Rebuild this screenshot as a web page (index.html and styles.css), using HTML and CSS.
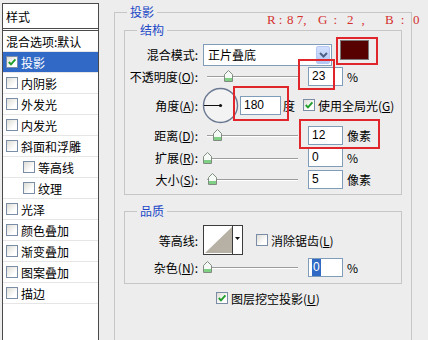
FILE: index.html
```html
<!DOCTYPE html>
<html>
  <head>
    <meta charset="utf-8">
    <title>图层样式 - 投影</title>
    <link rel="stylesheet" href="styles.css">
  </head>
  <body>
    <div id="dialog">
      <!-- 左侧样式列表 -->
      <div class="style-list">
        <div class="style-head">样式</div>
        <div class="style-item">混合选项:默认</div>
        <div class="style-item selected">
          <span class="check"><svg class="tick" viewBox="0 0 10 10"><path d="M1.8 5 L4 7.4 L8.4 2.4" /></svg></span>投影
        </div>
        <div class="style-item"><span class="check"></span>内阴影</div>
        <div class="style-item"><span class="check"></span>外发光</div>
        <div class="style-item"><span class="check"></span>内发光</div>
        <div class="style-item"><span class="check"></span>斜面和浮雕</div>
        <div class="style-item sub"><span class="check"></span>等高线</div>
        <div class="style-item sub"><span class="check"></span>纹理</div>
        <div class="style-item"><span class="check"></span>光泽</div>
        <div class="style-item"><span class="check"></span>颜色叠加</div>
        <div class="style-item"><span class="check"></span>渐变叠加</div>
        <div class="style-item"><span class="check"></span>图案叠加</div>
        <div class="style-item"><span class="check"></span>描边</div>
      </div>

      <!-- 投影设置 -->
      <div class="options">
        <fieldset class="group outer">
          <legend>投影</legend>

          <fieldset class="group structure">
            <legend>结构</legend>
            <div class="field blend">
              <label>混合模式:</label>
              <div class="select">
                <span class="select-text">正片叠底</span>
                <span class="select-btn">
                  <svg width="9" height="6" viewBox="0 0 9 6"><path d="M1 1 L4.5 4.5 L8 1" fill="none" stroke="#4d6185" stroke-width="2"/></svg>
                </span>
              </div>
              <span class="swatch"></span>
            </div>
            <div class="field opacity">
              <label>不透明度(<u>O</u>):</label>
              <div class="slider">
                <span class="thumb" style="left: 21px"><svg width="9" height="12" viewBox="0 0 9 12"><path d="M0.5 4.5 L4.5 0.5 L8.5 4.5 L8.5 11.5 L0.5 11.5 Z" fill="#f6faf6" stroke="#7f8c7f"/><rect x="1" y="8" width="7" height="3" fill="#7fcf84"/></svg></span>
              </div>
              <div class="num">23</div>
              <span class="unit">%</span>
            </div>
            <div class="field angle">
              <label>角度(<u>A</u>):</label>
              <svg class="dial" width="37" height="37" viewBox="0 0 37 37">
                <circle cx="18.5" cy="18.5" r="17" fill="#f3f3f3" stroke="#6b7891" stroke-width="1.4"/>
                <line x1="2" y1="18.5" x2="18.5" y2="18.5" stroke="#111" stroke-width="1"/>
                <circle cx="18.5" cy="18.5" r="1.6" fill="#111"/>
              </svg>
              <div class="num wide">180</div>
              <span class="unit">度</span>
              <span class="check global"><svg class="tick" viewBox="0 0 10 10"><path d="M1.8 5 L4 7.4 L8.4 2.4" /></svg></span>
              <span class="check-text">使用全局光(<u>G</u>)</span>
            </div>
            <div class="field distance">
              <label>距离(<u>D</u>):</label>
              <div class="slider">
                <span class="thumb" style="left: 10px"><svg width="9" height="12" viewBox="0 0 9 12"><path d="M0.5 4.5 L4.5 0.5 L8.5 4.5 L8.5 11.5 L0.5 11.5 Z" fill="#f6faf6" stroke="#7f8c7f"/><rect x="1" y="8" width="7" height="3" fill="#7fcf84"/></svg></span>
              </div>
              <div class="num">12</div>
              <span class="unit">像素</span>
            </div>
            <div class="field spread">
              <label>扩展(<u>R</u>):</label>
              <div class="slider">
                <span class="thumb" style="left: 0px"><svg width="9" height="12" viewBox="0 0 9 12"><path d="M0.5 4.5 L4.5 0.5 L8.5 4.5 L8.5 11.5 L0.5 11.5 Z" fill="#f6faf6" stroke="#7f8c7f"/><rect x="1" y="8" width="7" height="3" fill="#7fcf84"/></svg></span>
              </div>
              <div class="num">0</div>
              <span class="unit">%</span>
            </div>
            <div class="field size">
              <label>大小(<u>S</u>):</label>
              <div class="slider">
                <span class="thumb" style="left: 5px"><svg width="9" height="12" viewBox="0 0 9 12"><path d="M0.5 4.5 L4.5 0.5 L8.5 4.5 L8.5 11.5 L0.5 11.5 Z" fill="#f6faf6" stroke="#7f8c7f"/><rect x="1" y="8" width="7" height="3" fill="#7fcf84"/></svg></span>
              </div>
              <div class="num">5</div>
              <span class="unit">像素</span>
            </div>
          </fieldset>

          <fieldset class="group quality">
            <legend>品质</legend>
            <div class="field contour">
              <label>等高线:</label>
              <svg class="contour-box" width="40" height="30" viewBox="0 0 40 30">
                <rect x="0.5" y="0.5" width="39" height="29" fill="#fff" stroke="#3c3c3c"/>
                <polygon points="2,28 29,2 29,28" fill="#b6b1a4"/>
                <line x1="29.5" y1="1" x2="29.5" y2="29" stroke="#3c3c3c"/>
                <polygon points="32,12 37,12 34.5,15" fill="#111"/>
              </svg>
              <span class="check aa"></span>
              <span class="check-text">消除锯齿(<u>L</u>)</span>
            </div>
            <div class="field noise">
              <label>杂色(<u>N</u>):</label>
              <div class="slider">
                <span class="thumb" style="left: 0px"><svg width="9" height="12" viewBox="0 0 9 12"><path d="M0.5 4.5 L4.5 0.5 L8.5 4.5 L8.5 11.5 L0.5 11.5 Z" fill="#f6faf6" stroke="#7f8c7f"/><rect x="1" y="8" width="7" height="3" fill="#7fcf84"/></svg></span>
              </div>
              <div class="num"><span class="sel">0</span></div>
              <span class="unit">%</span>
            </div>
          </fieldset>

          <div class="knockout">
            <span class="check"><svg class="tick" viewBox="0 0 10 10"><path d="M1.8 5 L4 7.4 L8.4 2.4" /></svg></span>
            <span class="check-text">图层挖空投影(<u>U</u>)</span>
          </div>
        </fieldset>
      </div>

      <!-- 标注 -->
      <div class="rgb"><span>R:</span><span>8 7,</span><span>G:</span><span>2,</span><span>B:</span><span>0</span></div>
      <div class="mark mark-color"></div>
      <div class="mark mark-opacity"></div>
      <div class="mark mark-angle"></div>
      <div class="mark mark-distance"></div>
    </div>
  </body>
</html>
```

FILE: styles.css
```css
* {
  box-sizing: border-box;
}
body {
  margin: 0;
  background: #ededed;
  font-family: "Noto Sans CJK SC", "Liberation Sans", sans-serif;
  font-size: 12px;
  color: #000;
}

#dialog {
  position: relative;
  display: flex;
  align-items: flex-start;
  height: 340px;
  overflow: hidden;
}

/* 左侧列表 */
.style-list {
  margin: 3px 0 0 2px;
  width: 97px;
  height: 400px;
  background: #fff;
  border: 1px solid #4a4a4a;
}
.style-head {
  height: 27px;
  line-height: 26px;
  padding-left: 3px;
  border-bottom: 3px double #4a4a4a;
}
.style-item {
  display: flex;
  align-items: center;
  height: 21px;
  padding-left: 3px;
  border-bottom: 1px solid #e6e6e6;
  white-space: nowrap;
}
.style-item.sub {
  padding-left: 20px;
}
.style-item.selected {
  background: #3169c6;
  color: #fff;
}
.style-item .check {
  margin-right: 3px;
}

.check {
  display: inline-flex;
  flex: none;
  width: 12px;
  height: 12px;
  border: 1px solid #7a8ca6;
  background: linear-gradient(135deg, #dddcd5, #fff 70%);
}
.tick {
  width: 10px;
  height: 10px;
}
.tick path {
  fill: none;
  stroke: #1f9e2b;
  stroke-width: 1.9;
}
.check-text {
  margin-left: 3px;
  white-space: nowrap;
}

/* 右侧选项 */
.options {
  margin-left: 15px;
  padding-top: 4px;
  width: 298px;
}
.group {
  margin: 0;
  padding: 0;
  min-width: 0;
  border: 1px solid #c6c6c6;
}
.group legend {
  margin-left: 12px;
  padding: 0 3px;
  line-height: 16px;
  color: #2148c6;
}
.outer {
  padding: 0 9px 80px;
}
.outer > legend {
  margin-left: 3px;
}
.structure {
  margin-top: 2px;
  padding: 2px 0 5px;
}
.quality {
  margin-top: 8px;
  padding: 6px 0 6px;
}

.field {
  display: flex;
  align-items: center;
  height: 20px;
  white-space: nowrap;
}
.field label {
  width: 73px;
  margin-right: 5px;
  text-align: right;
}
.blend {
  height: 26px;
  align-items: flex-end;
}
.blend label {
  line-height: 22px;
}
.angle {
  height: 38px;
}
.distance {
  height: 22px;
}
.spread {
  height: 23px;
}
.contour {
  height: 30px;
}
.noise {
  margin-top: 2px;
}

.select {
  display: flex;
  width: 129px;
  height: 22px;
  padding: 1px;
  border: 1px solid #7f9db9;
  background: #fff;
}
.select-text {
  flex: 1;
  padding-left: 3px;
  line-height: 18px;
}
.select-btn {
  display: flex;
  align-items: center;
  justify-content: center;
  width: 14px;
  border: 1px solid #b5c7f2;
  border-radius: 2px;
  background: linear-gradient(#d3e0fd, #b3c7f6);
}
.swatch {
  align-self: flex-start;
  margin-left: 8px;
  width: 29px;
  height: 20px;
  border: 1px solid #7a7a7a;
  background: #570200;
}

.slider {
  position: relative;
  width: 105px;
  height: 100%;
}
.slider::before {
  content: "";
  position: absolute;
  left: 4px;
  width: 91px;
  top: 50%;
  height: 1px;
  background: #9c9c9c;
  border-bottom: 1px solid #fff;
  box-sizing: content-box;
}
.thumb {
  position: absolute;
  top: calc(50% - 6px);
  display: flex;
}

.num {
  width: 35px;
  height: 19px;
  padding-left: 3px;
  border: 1px solid #7f9db9;
  background: #fff;
  font-family: "Liberation Sans", sans-serif;
  font-size: 12px;
  line-height: 17px;
}
.num.wide {
  width: 41px;
  margin-left: 1px;
}
.num .sel {
  display: inline-block;
  padding: 0 1px;
  background: #316ac5;
  color: #fff;
}
.unit {
  margin-left: 4px;
}
.angle .unit {
  margin-left: 2px;
}
.dial {
  margin-left: -1px;
  flex: none;
}
.global {
  margin-left: 8px;
}
.aa {
  margin-left: 13px;
}

.knockout {
  display: flex;
  align-items: center;
  margin-top: 7px;
  padding-left: 92px;
  height: 14px;
}

/* 标注 */
.rgb {
  position: absolute;
  left: 267px;
  top: 12px;
  display: flex;
  font-family: "Liberation Serif", serif;
  font-size: 13px;
  line-height: 16px;
  color: #d4302e;
  letter-spacing: 3px;
  white-space: pre;
}
.rgb span:nth-child(1) { width: 20px; }
.rgb span:nth-child(2) { width: 31px; letter-spacing: 0; }
.rgb span:nth-child(3) { width: 29px; letter-spacing: 6px; }
.rgb span:nth-child(4) { width: 38px; letter-spacing: 8px; }
.rgb span:nth-child(5) { width: 28px; letter-spacing: 7px; }

.mark {
  position: absolute;
  border: 2px solid #e0262b;
}
.mark-color {
  left: 336px;
  top: 37px;
  width: 42px;
  height: 28px;
}
.mark-opacity {
  left: 298px;
  top: 59px;
  width: 37px;
  height: 31px;
}
.mark-angle {
  left: 233px;
  top: 86px;
  width: 56px;
  height: 35px;
}
.mark-distance {
  left: 299px;
  top: 119px;
  width: 81px;
  height: 30px;
}
```
